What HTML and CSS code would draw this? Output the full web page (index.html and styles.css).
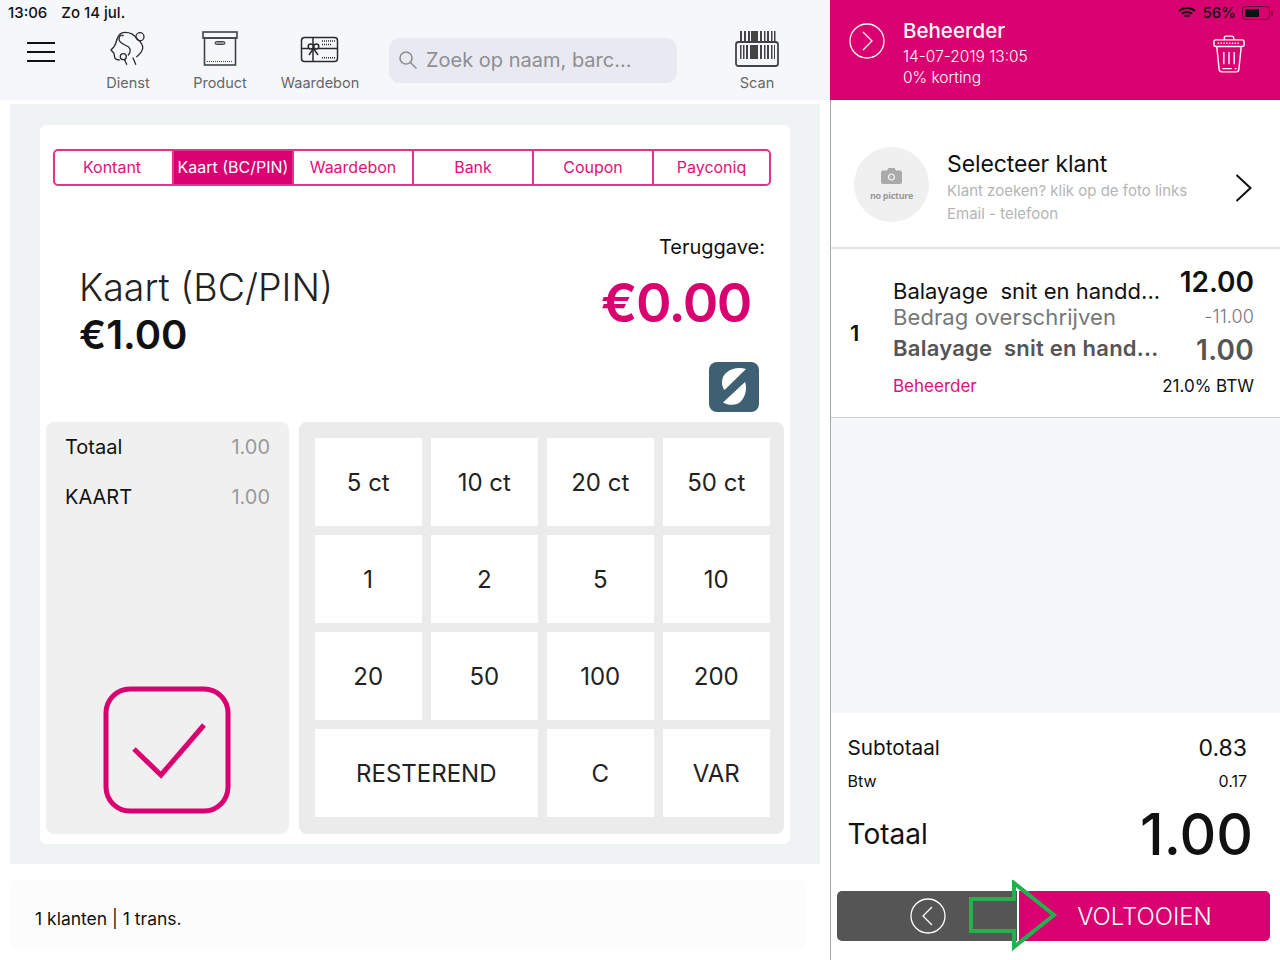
FILE: index.html
```html
<!DOCTYPE html>
<html>
<head>
    <title>Kassa</title>
    <link rel="stylesheet" href="styles.css">
</head>
<body>
    <div class="app">
        <div class="left">
            <div class="topbar">
                <div class="status"><span class="status__time">13:06</span>Zo 14 jul.</div>
                <div class="toolbar">
                    <div class="burger"><span></span><span></span><span></span></div>
                    <div class="tool tool--dienst">
                        <svg width="40" height="36" viewBox="0 0 40 36" fill="none" stroke="#2b2b2b" stroke-width="1.300" stroke-linecap="round" stroke-linejoin="round">
                            <path d="M8.700 10C10 5 13 2.300 17 2.300c5 0 9 2 11.700 6 3.500 3 6.500 6 6 10-.3 3.500-3 6-6 8.400"/>
                            <circle cx="32" cy="6.700" r="4"/>
                            <path d="M8.700 10c-.5 2.500-1.500 5-2.700 6.700L3 20l3 3.300.5 3c0 2.500 2 3.700 4.800 3.700"/>
                            <path d="M12.700 5c-2 2.500-2 5-.7 6.700 2 2.500 5 3 8.300 5 2.500 2 2.500 5 0 8.300"/>
                            <path d="M14 5.500h1" stroke-width="1.600"/>
                            <circle cx="15.300" cy="26.700" r="3"/>
                            <path d="M16.500 29.700l2.200 4.600M25 28l2.700 6.300"/>
                        </svg>
                        <span>Dienst</span>
                    </div>
                    <div class="tool tool--product">
                        <svg width="36" height="36" viewBox="0 0 36 36" fill="none" stroke="#444" stroke-width="1.600">
                            <rect x="1" y="1" width="34" height="6" fill="#f6f7fb"/>
                            <rect x="2.500" y="7" width="31" height="27"/>
                            <rect x="13" y="10.500" width="10" height="3" rx="1.500" fill="#999" stroke-width="1"/>
                            <path d="M5 30.500h26" stroke-dasharray="1 1" stroke-width="1.200"/>
                        </svg>
                        <span>Product</span>
                    </div>
                    <div class="tool tool--bon">
                        <svg width="40" height="28" viewBox="0 0 40 28" fill="none" stroke="#2b2b2b" stroke-width="1.500">
                            <rect x="1.500" y="1.500" width="36" height="24" rx="3"/>
                            <path d="M13 1.500v24M1.500 12.500h36"/>
                            <circle cx="10.700" cy="10.500" r="2.500" fill="#f6f7fb"/>
                            <circle cx="16.300" cy="10.500" r="2.500" fill="#f6f7fb"/>
                            <path d="M13.500 12.500l-4.500 6.500M13.500 12.500l4.500 6.500"/>
                            <path d="M22 5h13M22 8.500h9M22 21.700h13" stroke-dasharray="1 1"/>
                        </svg>
                        <span>Waardebon</span>
                    </div>
                    <div class="search">
                        <svg width="20" height="20" viewBox="0 0 20 20" fill="none" stroke="#8e8e93" stroke-width="1.600">
                            <circle cx="8" cy="8" r="6"/>
                            <path d="M12.500 12.500l5.500 5.500" stroke-linecap="round"/>
                        </svg>
                        <span>Zoek op naam, barc...</span>
                    </div>
                    <div class="tool tool--scan">
                        <svg width="44" height="36" viewBox="0 0 44 36" fill="none">
                            <path d="M5 0h2v10H5zM9 0h2v10H9zM13 0h2v10h-2zM16 0h7v10h-7zM25 0h2v10h-2zM29 0h1.500v10H29zM32 0h2v10h-2zM36 0h1.500v10H36zM39 0h1.500v10H39z" fill="#444"/>
                            <path d="M5 14h1.500v14H5zM8 14h1.500v14H8zM11 14h2v14h-2zM15 14h8v14h-8zM25 14h2v14h-2zM29 14h1.500v14H29zM32 14h2v14h-2zM36 14h1.500v14H36zM39 14h1v14h-1z" fill="#444"/>
                            <rect x="1" y="11" width="42" height="24" rx="2.500" stroke="#444" stroke-width="1.800"/>
                        </svg>
                        <span>Scan</span>
                    </div>
                </div>
            </div>

            <div class="main">
                <div class="card">
                    <div class="tabs">
                        <div class="tab">Kontant</div>
                        <div class="tab tab--active">Kaart (BC/PIN)</div>
                        <div class="tab">Waardebon</div>
                        <div class="tab">Bank</div>
                        <div class="tab">Coupon</div>
                        <div class="tab">Payconiq</div>
                    </div>

                    <div class="pay">
                        <div class="pay__method">
                            <div class="pay__name">Kaart (BC/PIN)</div>
                            <div class="pay__amount">€1.00</div>
                        </div>
                        <div class="pay__back">
                            <div class="pay__label">Teruggave:</div>
                            <div class="pay__change">€0.00</div>
                            <svg class="pay__logo" width="50" height="50" viewBox="0 0 50 50">
                                <rect width="50" height="50" rx="8" fill="#3f5f73"/>
                                <path d="M37 7L15.500 28C12 24 12 15 17 11 22 6 31 5 37 7Z" fill="#fff"/>
                                <path d="M36 20L14 40.500C20 44 29 44 33 38 37 33 38 25 36 20Z" fill="#fff"/>
                            </svg>
                        </div>
                    </div>

                    <div class="bottom">
                        <div class="summary">
                            <div class="summary__row"><span>Totaal</span><span class="summary__val">1.00</span></div>
                            <div class="summary__row"><span>KAART</span><span class="summary__val">1.00</span></div>
                            <svg class="summary__check" width="128" height="128" viewBox="0 0 128 128" fill="none" stroke="#d9006f">
                                <rect x="3" y="3" width="122" height="122" rx="24" stroke-width="5"/>
                                <path d="M31 63l27 26 43-50" stroke-width="5"/>
                            </svg>
                        </div>
                        <div class="keys">
                            <div class="key">5 ct</div>
                            <div class="key">10 ct</div>
                            <div class="key">20 ct</div>
                            <div class="key">50 ct</div>
                            <div class="key">1</div>
                            <div class="key">2</div>
                            <div class="key">5</div>
                            <div class="key">10</div>
                            <div class="key">20</div>
                            <div class="key">50</div>
                            <div class="key">100</div>
                            <div class="key">200</div>
                            <div class="key key--wide">RESTEREND</div>
                            <div class="key">C</div>
                            <div class="key">VAR</div>
                        </div>
                    </div>
                </div>
            </div>

            <div class="foot">1 klanten | 1 trans.</div>
        </div>

        <div class="right">
            <div class="head">
                <div class="head__status">
                    <svg width="18" height="13" viewBox="0 0 18 13" fill="none" stroke="#111" stroke-width="2">
                        <path d="M1 5c4.500-4 11.500-4 16 0M3.800 7.800c3-2.500 7.400-2.500 10.400 0M6.500 10.300c1.500-1 3.500-1 5 0"/>
                    </svg>
                    <span>56%</span>
                    <div class="battery"><div class="battery__fill"></div></div>
                </div>
                <svg class="circle" width="36" height="36" viewBox="0 0 36 36" fill="none" stroke="#fff" stroke-width="1.300">
                    <circle cx="18" cy="18" r="17"/>
                    <path d="M14 9l9 9-9 9"/>
                </svg>
                <div class="head__text">
                    <div class="head__name">Beheerder</div>
                    <div class="head__line">14-07-2019 13:05</div>
                    <div class="head__line">0% korting</div>
                </div>
                <svg class="trash" width="32" height="38" viewBox="0 0 34 40" fill="none" stroke="#fff" stroke-width="1.500">
                    <path d="M12 5V3a2 2 0 0 1 2-2h6a2 2 0 0 1 2 2v2"/>
                    <rect x="1" y="5" width="32" height="7" rx="2"/>
                    <path d="M5 8.500h24" stroke-dasharray="1.500 1.500"/>
                    <path d="M4 12l2.500 24a3 3 0 0 0 3 3h15a3 3 0 0 0 3-3L30 12"/>
                    <path d="M11.500 18v13M17 18v13M22.500 18v13M10 35.500h10M23 35.500h2"/>
                </svg>
            </div>

            <div class="client">
                <div class="client__pic">
                    <svg width="21" height="16" viewBox="0 0 21 16">
                        <path d="M2 2.500h4L7.500 0h6L15 2.500h4a2 2 0 0 1 2 2V14a2 2 0 0 1-2 2H2a2 2 0 0 1-2-2V4.500a2 2 0 0 1 2-2z" fill="#aaa"/>
                        <circle cx="10.500" cy="9" r="3.500" fill="#f0f0f0"/>
                        <circle cx="10.500" cy="9" r="2.200" fill="#aaa"/>
                    </svg>
                    <span>no picture</span>
                </div>
                <div class="client__text">
                    <div class="client__title">Selecteer klant</div>
                    <div class="client__hint">Klant zoeken? klik op de foto links</div>
                    <div class="client__hint">Email - telefoon</div>
                </div>
                <svg class="client__arrow" width="17" height="28" viewBox="0 0 17 28" fill="none" stroke="#111" stroke-width="2">
                    <path d="M1.500 1l14 13-14 13"/>
                </svg>
            </div>

            <div class="line">
                <div class="line__qty">1</div>
                <div class="line__body">
                    <div class="line__row line__row--first">
                        <span class="line__name">Balayage&nbsp; snit en handd...</span>
                        <span class="line__price">12.00</span>
                    </div>
                    <div class="line__row line__row--disc">
                        <span>Bedrag overschrijven</span>
                        <span class="line__minus">-11.00</span>
                    </div>
                    <div class="line__row line__row--total">
                        <span>Balayage&nbsp; snit en hand...</span>
                        <span class="line__net">1.00</span>
                    </div>
                    <div class="line__row line__row--meta">
                        <span class="line__who">Beheerder</span>
                        <span>21.0% BTW</span>
                    </div>
                </div>
            </div>

            <div class="spacer"></div>

            <div class="totals">
                <div class="totals__row totals__row--sub"><span>Subtotaal</span><span class="totals__subval">0.83</span></div>
                <div class="totals__row totals__row--btw"><span>Btw</span><span>0.17</span></div>
                <div class="totals__row totals__row--big"><span>Totaal</span><span class="totals__num">1.00</span></div>
            </div>

            <div class="actions">
                <div class="actions__back">
                    <svg width="36" height="36" viewBox="0 0 36 36" fill="none" stroke="#fff" stroke-width="1.300">
                        <circle cx="18" cy="18" r="17"/>
                        <path d="M22 9l-9 9 9 9"/>
                    </svg>
                </div>
                <div class="actions__go">VOLTOOIEN</div>
            </div>

            <svg class="arrow" width="92" height="72" viewBox="0 0 92 72" fill="none" stroke="#22b14c" stroke-width="4">
                <path d="M3 19H46V3L86 35 46 67V51H3z"/>
            </svg>
        </div>
    </div>
</body>
</html>
```

FILE: styles.css
```css
html, body {
    margin: 0;
    font-family: Inter, 'Open Sans', sans-serif;
    color: #111;
    background: #fff;
}

.app {
    display: flex;
    width: 1280px;
    height: 960px;
    overflow: hidden;
}

.left {
    display: flex;
    flex-direction: column;
    width: 830px;
}

/* top bar */
.topbar {
    height: 100px;
    background: #f6f7fb;
}

.status {
    padding: 4px 0 0 8px;
    height: 18px;
    font-size: 15px;
    line-height: 17px;
    font-weight: 500;
}

.status__time {
    margin-right: 14px;
}

.toolbar {
    display: flex;
    align-items: flex-start;
    height: 78px;
}

.burger {
    display: flex;
    flex-direction: column;
    gap: 7px;
    margin: 20px 0 0 27px;
    width: 28px;
}

.burger span {
    display: block;
    height: 2px;
    background: #111;
}

.tool {
    display: flex;
    flex-direction: column;
    align-items: center;
    margin-top: 8px;
    height: 61px;
    font-size: 14.500px;
    line-height: 17px;
    color: #666;
}

.tool svg {
    flex: none;
}

.tool span {
    margin-top: auto;
}

.tool--dienst {
    margin-left: 50px;
    width: 46px;
}

.tool--product {
    margin-left: 41px;
    width: 56px;
}

.tool--product svg {
    margin-top: 1px;
}

.tool--bon {
    margin-left: 32px;
    width: 80px;
}

.tool--bon svg {
    margin-top: 6px;
}

.tool--scan {
    margin: 9px 0 0 58px;
    width: 44px;
    height: 60px;
}

.search {
    display: flex;
    align-items: center;
    gap: 8px;
    box-sizing: border-box;
    margin: 16px 0 0 29px;
    padding: 0 0 1px 9px;
    width: 288px;
    height: 45px;
    background: #e8e9f1;
    border-radius: 11px;
    font-size: 20px;
    color: #8e8e93;
}

/* main area */
.main {
    box-sizing: border-box;
    margin: 4px 10px 0;
    padding: 21px 30px 20px;
    height: 760px;
    background: #f0f3f4;
}

.card {
    display: flex;
    flex-direction: column;
    height: 719px;
    background: #fff;
    border-radius: 6px;
}

.tabs {
    display: flex;
    box-sizing: border-box;
    margin: 24px 19px 0 13px;
    height: 37px;
    border: 2px solid #e8308c;
    border-radius: 5px;
    overflow: hidden;
}

.tab {
    display: flex;
    align-items: center;
    justify-content: center;
    flex: none;
    box-sizing: border-box;
    padding-bottom: 1px;
    width: 120px;
    font-size: 16px;
    color: #e0107c;
    border-left: 2px solid #e8308c;
}

.tab:first-child {
    padding-right: 3px;
    width: 117px;
    border-left: none;
}

.tab:last-child {
    flex: 1;
}

.tab--active {
    background: #d9006f;
    color: #fff;
    white-space: nowrap;
}

.pay {
    display: flex;
    justify-content: space-between;
    height: 236px;
}

.pay__method {
    margin: 78px 0 0 39px;
}

.pay__name {
    font-size: 37.500px;
    line-height: 48px;
    font-weight: 300;
    color: #222;
}

.pay__amount {
    font-size: 40px;
    line-height: 46px;
    font-weight: 600;
}

.pay__back {
    display: flex;
    flex-direction: column;
    align-items: flex-end;
    margin-right: 25px;
}

.pay__label {
    margin-top: 49px;
    font-size: 20px;
    line-height: 24px;
}

.pay__change {
    margin: 13px 14px 0 0;
    font-size: 54px;
    line-height: 62px;
    font-weight: 600;
    letter-spacing: -1.500px;
    color: #d9006f;
}

.pay__logo {
    margin: 28px 6px 0 0;
}

.bottom {
    display: flex;
    gap: 10px;
    margin: 0 6px;
    height: 412px;
}

.summary {
    position: relative;
    box-sizing: border-box;
    padding: 13px 19px 0;
    width: 243px;
    background: #f0f0f0;
    border-radius: 8px;
}

.summary__row {
    display: flex;
    justify-content: space-between;
    margin-bottom: 26px;
    font-size: 20px;
    line-height: 24px;
}

.summary__val {
    color: #9a9a9a;
}

.summary__check {
    position: absolute;
    left: 57px;
    top: 264px;
}

.keys {
    display: grid;
    grid-template-columns: repeat(4, 106.500px);
    grid-auto-rows: 87.500px;
    gap: 9.500px;
    box-sizing: border-box;
    padding: 16px 14px 0 16px;
    width: 485px;
    background: #ebebeb;
    border-radius: 8px;
}

.key {
    display: flex;
    align-items: center;
    justify-content: center;
    padding-top: 1px;
    background: #fff;
    font-size: 24px;
    color: #222;
}

.key--wide {
    grid-column: span 2;
}

.foot {
    display: flex;
    align-items: center;
    box-sizing: border-box;
    margin: 16px 25px 0 10px;
    padding: 8px 0 0 25px;
    height: 68px;
    background: #fcfcfc;
    border-radius: 6px;
    font-size: 17.500px;
}

/* right panel */
.right {
    position: relative;
    display: flex;
    flex-direction: column;
    box-sizing: border-box;
    width: 450px;
    border-left: 1px solid #a8a8a8;
    background: #fff;
}

.head {
    position: relative;
    display: flex;
    align-items: flex-start;
    margin-left: -1px;
    height: 100px;
    background: #d9006f;
    color: #fff;
}

.head__status {
    position: absolute;
    top: 4px;
    right: 10px;
    display: flex;
    align-items: center;
    gap: 6px;
    font-size: 15px;
    line-height: 17px;
    font-weight: 500;
    color: #111;
}

.battery {
    position: relative;
    box-sizing: border-box;
    padding: 2px;
    width: 28px;
    height: 14px;
    border: 1px solid #6b0038;
    border-radius: 4px;
}

.battery::after {
    content: "";
    position: absolute;
    top: 3px;
    right: -4px;
    width: 2px;
    height: 6px;
    background: #6b0038;
    border-radius: 0 2px 2px 0;
}

.battery__fill {
    width: 14px;
    height: 100%;
    background: #111;
    border-radius: 1px;
}

.circle {
    margin: 23px 0 0 19px;
}

.head__text {
    margin: 15px 0 0 18px;
}

.head__name {
    font-size: 20.500px;
    line-height: 31px;
    font-weight: 500;
}

.head__line {
    font-size: 15.500px;
    line-height: 21px;
    font-weight: 300;
}

.trash {
    margin: 35px 35px 0 auto;
}

.client {
    display: flex;
    align-items: center;
    box-sizing: border-box;
    padding-top: 22px;
    height: 149px;
    border-bottom: 2px solid #e4e4e4;
}

.client__pic {
    display: flex;
    flex-direction: column;
    align-items: center;
    justify-content: center;
    gap: 5px;
    flex: none;
    margin-left: 23px;
    width: 75px;
    height: 75px;
    background: #f0f0f0;
    border-radius: 50%;
    font-size: 9px;
    font-weight: 700;
    letter-spacing: -0.300px;
    color: #999;
    font-family: 'Open Sans', sans-serif;
}

.client__text {
    margin: 4px 0 0 18px;
}

.client__title {
    font-size: 23px;
    line-height: 30px;
    letter-spacing: -0.100px;
}

.client__hint {
    font-size: 15px;
    line-height: 23px;
    color: #b5b5b5;
}

.client__arrow {
    margin: 7px 0 0 48px;
}

.line {
    display: flex;
    box-sizing: border-box;
    height: 169px;
    border-bottom: 1px solid #d0d0d0;
}

.line__qty {
    margin: 70px 0 0 19px;
    width: 43px;
    font-size: 22px;
    line-height: 28px;
    font-weight: 600;
}

.line__body {
    flex: 1;
    margin-right: 26px;
}

.line__row {
    display: flex;
    justify-content: space-between;
    align-items: flex-end;
    white-space: nowrap;
}

.line__row--first {
    margin-top: 17px;
    height: 38px;
    font-size: 22px;
    line-height: 26px;
}

.line__price {
    margin-bottom: 4px;
    font-size: 28px;
    line-height: 36px;
    font-weight: 600;
}

.line__name {
    font-size: 22px;
}

.line__row--disc {
    height: 26px;
    font-size: 22px;
    line-height: 26px;
    letter-spacing: 0.100px;
    color: #777;
}

.line__minus {
    font-size: 18px;
    font-weight: 300;
    color: #777;
}

.line__row--total {
    height: 32px;
    font-size: 22px;
    line-height: 28px;
    font-weight: 600;
    letter-spacing: 0.250px;
    color: #555;
}

.line__net {
    margin-bottom: -5px;
    font-size: 28px;
    line-height: 34px;
}

.line__row--meta {
    height: 35px;
    font-size: 17px;
    line-height: 22px;
}

.line__who {
    color: #e0107c;
}

.spacer {
    flex: 1;
    background: #f6f7fb;
}

.totals {
    box-sizing: border-box;
    padding: 19px 33px 0 16.500px;
    height: 178px;
}

.totals__row {
    display: flex;
    justify-content: space-between;
}

.totals__row--sub {
    height: 35px;
    font-size: 20.700px;
    line-height: 32px;
}

.totals__subval {
    font-size: 23px;
}

.totals__row--btw {
    height: 28px;
    font-size: 16px;
    line-height: 28px;
}

.totals__row--big {
    align-items: center;
    margin-top: 6px;
    margin-right: -6px;
    height: 66px;
    font-size: 28px;
}

.totals__num {
    font-size: 57px;
    font-weight: 500;
}

.actions {
    display: flex;
    margin: 0 10px 19px 6px;
    height: 50px;
    border-radius: 5px;
    overflow: hidden;
}

.actions__back {
    display: flex;
    align-items: center;
    justify-content: center;
    box-sizing: border-box;
    padding-left: 2px;
    width: 182px;
    background: #555;
    border-right: 2px solid #fff;
}

.actions__go {
    display: flex;
    align-items: center;
    justify-content: center;
    flex: 1;
    background: #d9006f;
    color: #fff;
    font-size: 24px;
    font-weight: 300;
}

.arrow {
    position: absolute;
    left: 137px;
    top: 880px;
}
```
